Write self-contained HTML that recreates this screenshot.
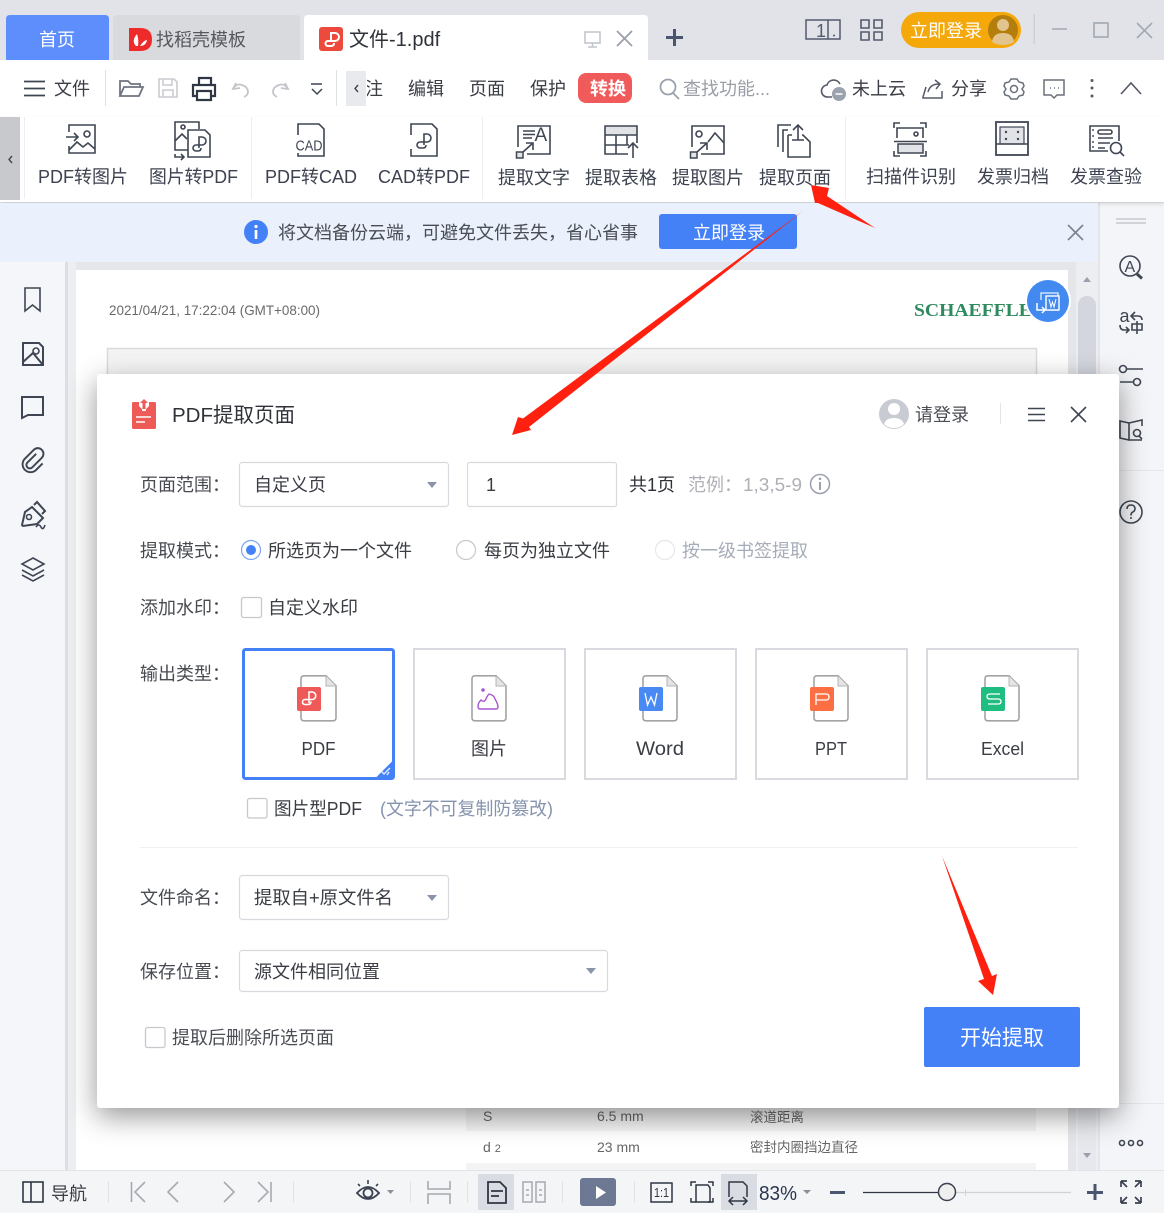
<!DOCTYPE html>
<html lang="zh-CN"><head><meta charset="utf-8"><title>PDF提取页面</title>
<style>
html,body{margin:0;padding:0;background:#fff;width:1164px;height:1213px;overflow:hidden}
svg{display:block}
text{font-family:"Liberation Sans","Noto Sans CJK SC",sans-serif;font-size:18px;fill:#3a3d44}
.i{fill:none;stroke:#3f4653;stroke-width:2}
.i1{fill:none;stroke:#3f4653;stroke-width:1.6}
.g{fill:none;stroke:#b9bcc2;stroke-width:2}
.w{fill:#fff}
.card{fill:#fff;stroke:#d9d9df;stroke-width:2}
.box{fill:#fff;stroke:#d8dae0;stroke-width:1.2}
.doc{fill:#fff;stroke:#a3a3a3;stroke-width:1.6}
.lab{fill:#484b52}
.tb{text-anchor:middle;fill:#3a3d44}
</style></head><body>
<svg width="1164" height="1213" viewBox="0 0 1164 1213" xmlns="http://www.w3.org/2000/svg">
<defs>
<filter id="sh" x="-10%" y="-10%" width="120%" height="125%"><feDropShadow dx="0" dy="8" stdDeviation="14" flood-color="#000" flood-opacity=".42"/></filter>
<filter id="s2" x="-2%" y="-20%" width="104%" height="150%"><feDropShadow dx="0" dy="2" stdDeviation="2" flood-color="#000" flood-opacity=".12"/></filter>
<linearGradient id="fade" x1="0" y1="0" x2="0" y2="1"><stop offset="0" stop-color="#f3f3f3"/><stop offset="1" stop-color="#fff"/></linearGradient>
<clipPath id="c1"><rect x="367" y="70" width="30" height="40"/></clipPath>
</defs>
<rect width="1164" height="1213" fill="#e4e6e9"/>

<!-- left sidebar -->
<rect x="0" y="262" width="65" height="910" fill="#f4f6f9"/>
<rect x="65" y="262" width="3" height="910" fill="#dcdee2"/>
<rect x="68" y="262" width="8" height="910" fill="#eceef1"/>
<!-- page -->
<rect x="76" y="270" width="992" height="902" fill="#fff"/>
<text x="109" y="315" style="font-size:14px;fill:#6a6a6a" textLength="211" lengthAdjust="spacingAndGlyphs">2021/04/21, 17:22:04 (GMT+08:00)</text>
<text x="914" y="316" style="font-family:'Liberation Serif',serif;font-weight:bold;font-size:18px;fill:#2f8a5e" textLength="132" lengthAdjust="spacingAndGlyphs">SCHAEFFLER</text>
<circle cx="1048" cy="301" r="23" fill="#fff"/><circle cx="1048" cy="301" r="21" fill="#4289f0"/>
<path d="M1041 300v-7h17v17h-10" fill="none" stroke="#cfe1fb" stroke-width="1.500"/><rect x="1046" y="296" width="13" height="14" fill="#4289f0" stroke="#fff" stroke-width="1.400"/><path d="M1049 299l2 8 1.500-5 1.500 5 2-8" fill="none" stroke="#fff" stroke-width="1"/><path d="M1037 303v7h8m-3-3l3 3-3 3" fill="none" stroke="#fff" stroke-width="1.500"/>
<rect x="107.500" y="348.500" width="929" height="60" fill="url(#fade)" stroke="#dadada" stroke-width="1.500"/>
<rect x="466" y="1100" width="570" height="31" fill="#f4f4f4"/>
<rect x="466" y="1163" width="570" height="9" fill="#f4f4f4"/>
<text x="483" y="1121" style="font-size:14px;fill:#666">S</text>
<text x="597" y="1121" style="font-size:14px;fill:#666">6.5  mm</text>
<text x="750" y="1122" style="font-size:13.500px;fill:#666">滚道距离</text>
<text x="483" y="1152" style="font-size:14px;fill:#666">d <tspan style="font-size:11px">2</tspan></text>
<text x="597" y="1152" style="font-size:14px;fill:#666">23  mm</text>
<text x="750" y="1152" style="font-size:13.500px;fill:#666">密封内圈挡边直径</text>

<!-- scrollbar + right side -->
<rect x="1076" y="262" width="24" height="910" fill="#eceef2"/>
<rect x="1078" y="296" width="18" height="860" rx="9" fill="#d3d6df"/>
<rect x="1078" y="1100" width="18" height="70" fill="#e6e8ed"/>
<path d="M1083 282h8l-4-5z" fill="#9aa0b0"/><path d="M1083 1153h8l-4 5z" fill="#9aa0b0"/>
<rect x="1099" y="203" width="65" height="969" fill="#f4f5f8"/>
<rect x="1098" y="203" width="2" height="969" fill="#e5e6ea"/>
<path d="M1116 219h30M1116 223h30" stroke="#c6c8cd" stroke-width="1.500"/>
<circle cx="1130" cy="266" r="10" class="i1"/><path d="M1137 274l5 4.500" stroke="#3f4653" stroke-width="3"/>
<text x="1124.500" y="272" style="font-size:16px;fill:#3f4653">A</text>
<text x="1119.500" y="322" style="font-size:18px;fill:#3f4653">a</text>
<path d="M1142 320q0-4-4-4h-6M1135 312l-4 4 4 4M1120 325q0 5 4 5h5M1126 327l3 3-3 3" class="i1"/>
<path d="M1132 324h10v6h-10zM1137 321v13" class="i1"/>
<circle cx="1123" cy="369" r="3.500" class="i1"/><path d="M1127 369h16M1120 382h13" class="i1"/><circle cx="1137" cy="382" r="3.500" class="i1"/>
<path d="M1120 421l9 2v17l-9-2zM1129 423l13-3v6M1129 440h13" class="i1"/><circle cx="1137" cy="433" r="3.500" class="i1"/><path d="M1139 436l3 3" class="i1"/>
<rect x="1100" y="470" width="64" height="1" fill="#e6e7ea"/>
<circle cx="1131" cy="512" r="11" class="i1"/><path d="M1127 509q0-4 4-4t4 4q0 2-3 3.500-1 .7-1 3" class="i1"/><circle cx="1131" cy="518" r="1" fill="#3f4653"/>
<rect x="1100" y="1103" width="64" height="1" fill="#e6e7ea"/>
<circle cx="1122" cy="1143" r="2.500" class="i1"/><circle cx="1131" cy="1143" r="2.500" class="i1"/><circle cx="1140" cy="1143" r="2.500" class="i1"/>

<!-- left icons -->
<path d="M25 288h15v23l-7.500-6-7.500 6z" class="i1" stroke-width="2"/>
<path d="M23 343h16l4 4v18H23zM23 362l10-9 10 12" class="i"/><circle cx="36" cy="351" r="3" class="i1"/>
<path d="M22 397h21v18H28l-6 3z" class="i"/>
<path transform="translate(33 461) scale(.8) translate(-33 -465)" d="M37 456l-11 11a4 4 0 0 0 6 6l12-12a7 7 0 0 0-10-10l-12 12a10 10 0 0 0 14 14l9-9" fill="none" stroke="#3f4653" stroke-width="2.400"/>
<path d="M32 507l11 11-6 6-14 2-1-1 3-13zM34 505l3-3 8 9-3 3" class="i"/><circle cx="29" cy="517" r="2.500" class="i1"/><path d="M36 527q3-4 5 0t4-2" class="i1"/>
<path d="M33 558l11 6-11 6-11-6zM22 570l11 6 11-6M22 575l11 6 11-6" class="i1"/>

<!-- Tab bar -->
<rect x="0" y="0" width="1164" height="60" fill="#e1e3e8"/>
<path d="M6 60V19q0-4 4-4h95q4 0 4 4v41z" fill="#5e8efc"/>
<text x="39" y="46" style="fill:#fff">首页</text>
<path d="M113 60V19q0-4 4-4h179q4 0 4 4v41z" fill="#d9dade"/>
<path d="M129 28h11q12 0 12 11.500T140 51h-11z" fill="#ee2a2a"/><path d="M136 46q-5-5 1-12 2 6 1 12zM140 46q4-6 7-6-1 6-7 6z" fill="#fff"/>
<text x="156" y="46" style="fill:#55585e">找稻壳模板</text>
<path d="M304 60V19q0-4 4-4h336q4 0 4 4v41z" fill="#fff"/>
<rect x="319" y="27" width="24" height="24" rx="3" fill="#ec4a3c"/>
<path d="M331 42v-9h4a3.500 3.500 0 0 1 0 8h-7a2.500 2.500 0 0 0 0 5h3q3 0 3-3" fill="none" stroke="#fff" stroke-width="2"/>
<text x="349" y="46" style="font-size:20px;fill:#2f3238">文件-1.pdf</text>
<path d="M585 32h15v11h-15zM592.500 43v4M588 47h9" fill="none" stroke="#bfc3ca" stroke-width="1.500"/>
<path d="M617 31l15 15M632 31l-15 15" stroke="#9a9fa8" stroke-width="1.800"/>
<path d="M666 37.500h17M674.500 29v17" stroke="#4a5570" stroke-width="3"/>
<path d="M806 20h34v19h-34zM828 20v19" fill="none" stroke="#525a6e" stroke-width="1.500"/><path d="M833 35.500h2" stroke="#525a6e" stroke-width="1.500"/><text x="816" y="37" style="font-size:18px;fill:#525a6e">1</text>
<path d="M861 20h8v8h-8zM874 20h8v8h-8zM861 32h8v8h-8zM874 32h8v8h-8z" fill="none" stroke="#525a6e" stroke-width="1.600"/>
<rect x="901" y="12" width="120" height="36" rx="18" fill="#f5a80a"/>
<text x="910" y="37" style="fill:#fff">立即登录</text>
<circle cx="1003" cy="30" r="15" fill="#b57e0c"/><circle cx="1003" cy="25" r="6" fill="#e2c48e"/><path d="M992 42q1-9 11-9t11 9q-5 3-11 3t-11-3z" fill="#e2c48e"/>
<rect x="1033.500" y="14" width="1.500" height="30" fill="#cdd0d6"/>
<path d="M1052 29h15" stroke="#a2a8b4" stroke-width="1.500"/>
<rect x="1094" y="23" width="14" height="14" fill="none" stroke="#a2a8b4" stroke-width="1.600"/>
<path d="M1137 23l15 15M1152 23l-15 15" stroke="#a2a8b4" stroke-width="1.600"/>

<!-- Row 2 -->
<rect x="0" y="60" width="1164" height="57" fill="#fff"/>
<path d="M24 81.500h21M24 88.500h21M24 95.500h21" stroke="#3f4653" stroke-width="1.800"/>
<text x="54" y="95">文件</text>
<rect x="105" y="70" width="1" height="36" fill="#dfe0e3"/>
<path d="M120 96V81h8l3 3h9v3M120 96l4-9h19l-4 9z" fill="none" stroke="#6f7580" stroke-width="1.800"/>
<path d="M159 79h15l3 3v15h-18zM163 79v6h9v-6M163 97v-7h10v7" fill="none" stroke="#c9cbcf" stroke-width="1.600"/>
<path d="M199 85v-7h12v7M196 96h-3V85h22v11h-3M197 91h14v9h-14z" fill="none" stroke="#2f3644" stroke-width="2.200"/>
<path d="M236 83l-3 6 7-1M233 89q3-6 9-4 6 2 6 7 0 3-4 5" fill="none" stroke="#c3c5ca" stroke-width="1.800"/>
<path d="M285 83l3 6-7-1M288 89q-3-6-9-4-6 2-6 7 0 3 4 5" fill="none" stroke="#c3c5ca" stroke-width="1.800"/>
<path d="M311 84h11M312 89l5 5 5-5" fill="none" stroke="#3f4653" stroke-width="1.500"/>
<rect x="336" y="70" width="1" height="36" fill="#dfe0e3"/>
<rect x="346" y="71" width="20" height="35" fill="#e8eaed"/>
<path d="M358 85l-3 3.500 3 3.500" fill="none" stroke="#3f4653" stroke-width="1.400"/>
<g clip-path="url(#c1)"><text x="365" y="95">注</text></g>
<text x="408" y="95">编辑</text><text x="469" y="95">页面</text><text x="530" y="95">保护</text>
<rect x="578" y="73" width="54" height="30" rx="8" fill="#f05a5a"/>
<text x="590" y="95" style="fill:#fff;font-weight:bold">转换</text>
<circle cx="668" cy="87" r="7.500" fill="none" stroke="#9aa2ae" stroke-width="1.800"/><path d="M673 93l6 6" stroke="#9aa2ae" stroke-width="1.800"/>
<text x="683" y="95" style="fill:#9a9ea6">查找功能...</text>
<path d="M832 97h-4a6 6 0 0 1-1-12 7 7 0 0 1 13-1" fill="none" stroke="#555b66" stroke-width="1.600"/>
<circle cx="839" cy="94" r="7" fill="#9aa2ae"/><path d="M835.500 94h7" stroke="#fff" stroke-width="1.500"/>
<text x="852" y="95">未上云</text>
<path d="M926 87l-3 10v1h19v-7M928 92q2-8 11-8M935 80l5 4-4 5" fill="none" stroke="#555b66" stroke-width="1.500"/>
<text x="951" y="95">分享</text>
<path d="M1014 79l3 0 2 3 4 1 1 3-2 3 2 3-1 3-4 1-2 3h-6l-2-3-4-1-1-3 2-3-2-3 1-3 4-1 2-3z" fill="none" stroke="#6a707b" stroke-width="1.500"/><circle cx="1014" cy="89" r="3.500" fill="none" stroke="#6a707b" stroke-width="1.500"/>
<path d="M1044 80h20v15h-7l-3 3-3-3h-7z" fill="none" stroke="#6a707b" stroke-width="1.500"/><path d="M1050 88h1M1054 88h1M1058 88h1" stroke="#6a707b" stroke-width="1.500"/>
<circle cx="1092" cy="80.500" r="1.500" fill="#555b66"/><circle cx="1092" cy="88" r="1.500" fill="#555b66"/><circle cx="1092" cy="96" r="1.500" fill="#555b66"/>
<path d="M1121 94l10-11 10 11" fill="none" stroke="#555b66" stroke-width="1.600"/>

<!-- Row 3 -->
<rect x="0" y="117" width="1164" height="85" fill="#fff" filter="url(#s2)"/>
<rect x="0" y="117" width="20" height="83" fill="#c8c9cc"/>
<path d="M12 156l-3 3.500 3 3.500" fill="none" stroke="#3f4653" stroke-width="1.400"/>
<path d="M24.500 117v82M251.500 117v82M482.500 117v82M845.500 117v82" stroke="#eeeef0"/>
<!-- icon 1 -->
<path d="M69 132v-7h26v28H69v-7M69 150l8-8 6 5 5-4 7 6" class="i1"/><circle cx="87" cy="134" r="3" class="i1"/><path d="M66 137h12m-4-4l4 4-4 4" class="i1"/>
<!-- icon 2 -->
<path d="M188 150h-13v-28h24v7M175 141l7-7 5 5" class="i1"/><circle cx="183" cy="127" r="2" class="i1"/>
<path d="M188 130h17l5 5v22h-22z" fill="#fff" stroke="#3f4653" stroke-width="1.600"/>
<path d="M199 148v-11h3a3.500 3.500 0 0 1 0 8h-6a3 3 0 0 0 0 6h2q3 0 3-3" class="i1"/><path d="M175 154v3h9m-3-3l3 3-3 3" class="i1"/>
<!-- icon 3 -->
<path d="M298 135v-11h21l5 5v27h-26v-3" class="i1"/>
<text x="295.500" y="150.500" style="font-size:15px;fill:#3f4653" textLength="27" lengthAdjust="spacingAndGlyphs">CAD</text>
<!-- icon 4 -->
<path d="M411 135v-11h21l5 5v27h-26v-7" class="i1"/>
<path d="M424 145v-11h3a3.500 3.500 0 0 1 0 8h-7a3 3 0 0 0 0 6h3q3 0 3-3" class="i1"/>
<!-- icon 5 -->
<path d="M518 147v-21h32v28h-23" class="i1"/><path d="M523 131h12M523 134.500h12M523 138h9" stroke="#3f4653" stroke-width="1.400"/>
<text x="534.500" y="141" style="font-size:19px;fill:#3f4653">A</text>
<rect x="516.500" y="152" width="6.500" height="6" fill="#e3e4e6" stroke="#3f4653" stroke-width="1.500"/><path d="M523 152l10-9M526 143h7v7" class="i1"/>
<!-- icon 6 -->
<rect x="605" y="126" width="32" height="9" fill="#e1e3e6"/>
<path d="M628 154h-23v-28h32v17M605 135h32M605 145h24M616 135v19M627 135v10" class="i1"/><path d="M633 158v-15m-5 5l5-5 5 5" class="i1"/>
<!-- icon 7 -->
<path d="M692 147v-21h32v28h-23M708 142l7-9 9 10" class="i1"/><circle cx="699" cy="134" r="3" class="i1"/>
<rect x="690.500" y="152" width="6.500" height="6" fill="#e3e4e6" stroke="#3f4653" stroke-width="1.500"/><path d="M697 152l10-9M700 143h7v7" class="i1"/>
<!-- icon 8 -->
<path d="M778 147v-22h13M783 152v-22h5M788 135v22h22v-15l-7-7h-1M788 135h4M798 140v-15M793 130l5-5 5 5M792 140h12" class="i1"/>
<!-- icon 9 -->
<path d="M894 128v-5h6M926 128v-5h-6M894 151v5h6M926 151v5h-6" class="i1"/>
<path d="M897 138v-10h26v10" class="i1"/><circle cx="916" cy="134" r="2" class="i1"/>
<path d="M894 141.500h33" class="i1"/><rect x="898" y="144" width="25" height="9" fill="#e1e3e6" stroke="#3f4653" stroke-width="1.500"/>
<!-- icon 10 -->
<rect x="996" y="122" width="32" height="33" fill="none" stroke="#3f4653" stroke-width="1.800"/>
<rect x="1000" y="127" width="24" height="17" fill="#e1e3e6" stroke="#3f4653" stroke-width="1.200"/><path d="M996 144h32" class="i1"/>
<circle cx="1006" cy="132" r="1.200" fill="#3f4653"/><circle cx="1006" cy="139" r="1.200" fill="#3f4653"/><circle cx="1018" cy="132" r="1.200" fill="#3f4653"/><circle cx="1018" cy="139" r="1.200" fill="#3f4653"/>
<!-- icon 11 -->
<path d="M1108 151h-18v-25h29v15" class="i1"/><rect x="1098" y="130" width="14" height="4" rx="2" class="i1"/>
<path d="M1093 129v2M1093 135v2M1093 141v2M1093 146v2M1098 138h15M1098 143h12M1098 148h7" stroke="#3f4653" stroke-width="1.400"/>
<circle cx="1116" cy="148" r="5.500" fill="#fff" stroke="#3f4653" stroke-width="1.600"/><path d="M1120 152l4 4" class="i1"/>

<text x="38" y="183" style="fill:#3d4250">PDF转图片</text><text x="149" y="183" style="fill:#3d4250" textLength="89" lengthAdjust="spacingAndGlyphs">图片转PDF</text>
<text x="265" y="183" style="fill:#3d4250">PDF转CAD</text><text x="378" y="183" style="fill:#3d4250">CAD转PDF</text>
<text x="498" y="184" style="fill:#3d4250">提取文字</text><text x="585" y="184" style="fill:#3d4250">提取表格</text>
<text x="672" y="184" style="fill:#3d4250">提取图片</text><text x="759" y="184" style="fill:#3d4250">提取页面</text>
<text x="866" y="183" style="fill:#3d4250">扫描件识别</text><text x="977" y="183" style="fill:#3d4250">发票归档</text><text x="1070" y="183" style="fill:#3d4250">发票查验</text>

<!-- Banner -->
<rect x="0" y="203" width="1098" height="59" fill="#eaf1fd"/>
<circle cx="256" cy="232" r="12" fill="#4481f7"/><rect x="254.700" y="230" width="2.600" height="9" fill="#fff"/><circle cx="256" cy="226.500" r="1.600" fill="#fff"/>
<text x="278" y="239" style="fill:#4a4d54">将文档备份云端&#xFF0C;可避免文件丢失&#xFF0C;省心省事</text>
<rect x="659" y="214" width="138" height="35" rx="3" fill="#4481f7"/>
<text x="693" y="239" style="fill:#fff">立即登录</text>
<path d="M1068 225l15 15M1083 225l-15 15" stroke="#7d828c" stroke-width="1.600"/>

<!-- Dialog -->
<rect x="97" y="374" width="1022" height="734" rx="3" fill="#fff" filter="url(#sh)"/>
<rect x="132" y="402" width="24" height="27" rx="1.500" fill="#ee5a55"/>
<path d="M139 398h10v8l-3 3v2h-4v-2l-3-3z" fill="#fff"/><path d="M144 399l-4 4h2.500v6h3v-6h2.500z" fill="#ee5a55"/>
<path d="M136 417h15M136 422h9" stroke="#fff" stroke-width="1.400"/>
<text x="172" y="422" style="font-size:20.500px;fill:#2f3238">PDF提取页面</text>
<circle cx="894" cy="414" r="15" fill="#c8ccd2"/><circle cx="894" cy="409" r="6" fill="#fff"/><path d="M884 424q2-6 10-6t10 6q-4 4-10 4t-10-4z" fill="#fff"/>
<text x="915" y="421" style="fill:#4a4d54">请登录</text>
<rect x="1000" y="403" width="1" height="21" fill="#e3e4e7"/>
<path d="M1028 408.500h17M1028 414.500h17M1028 420.500h17" stroke="#3f4653" stroke-width="1.500"/>
<path d="M1071 407l15 15M1086 407l-15 15" stroke="#3f4653" stroke-width="1.600"/>

<text x="140" y="491" class="lab">页面范围&#xFF1A;</text>
<rect x="239.500" y="462.500" width="209" height="44" rx="3" class="box"/>
<text x="254" y="491">自定义页</text><path d="M427 482h10l-5 6z" fill="#8a93aa"/>
<rect x="467.500" y="462.500" width="149" height="44" rx="2" class="box"/>
<text x="486" y="491">1</text>
<text x="629" y="491" style="fill:#2f3238">共1页</text>
<text x="688" y="491" style="fill:#aeb0b6">范例&#xFF1A;</text><text x="743" y="491" style="fill:#aeb0b6" textLength="59" lengthAdjust="spacingAndGlyphs">1,3,5-9</text>
<circle cx="820" cy="484" r="9.500" fill="none" stroke="#9aa0ae" stroke-width="1.500"/><rect x="819" y="482" width="2" height="8" fill="#9aa0ae"/><circle cx="820" cy="478.800" r="1.300" fill="#9aa0ae"/>

<text x="140" y="557" class="lab">提取模式&#xFF1A;</text>
<circle cx="251" cy="550" r="9.500" fill="#fff" stroke="#7aa5f5" stroke-width="1.200"/><circle cx="251" cy="550" r="5" fill="#4481f7"/>
<text x="268" y="557">所选页为一个文件</text>
<circle cx="466" cy="550" r="9.500" fill="#fff" stroke="#c6c8ce" stroke-width="1.200"/>
<text x="484" y="557">每页为独立文件</text>
<circle cx="665" cy="550" r="9.500" fill="#fff" stroke="#e6e7ea" stroke-width="1.200"/>
<text x="682" y="557" style="fill:#a6acb8">按一级书签提取</text>

<text x="140" y="614" class="lab">添加水印&#xFF1A;</text>
<rect x="241.500" y="597.500" width="20" height="20" rx="2" fill="#fff" stroke="#c6c8ce" stroke-width="1.300"/>
<text x="268" y="614">自定义水印</text>

<text x="140" y="680" class="lab">输出类型&#xFF1A;</text>
<rect x="243.500" y="649.500" width="150" height="129" rx="2" fill="#fff" stroke="#4481f7" stroke-width="3"/>
<path d="M375 778.500l19-19v16q0 4-3 4z" fill="#4481f7"/><path d="M381 771l3 3 6-6M389 772l-2 3" fill="none" stroke="#dfe9fd" stroke-width="1.500"/>
<rect x="414" y="649" width="151" height="130" class="card"/>
<rect x="585" y="649" width="151" height="130" class="card"/>
<rect x="756" y="649" width="151" height="130" class="card"/>
<rect x="927" y="649" width="151" height="130" class="card"/>

<path d="M304 675.800h22l10 10v32q0 3-3 3h-29q-3 0-3-3v-39q0-3 3-3z" class="doc"/><path d="M326 676v10h10" fill="#e4e4e4" stroke="#b5b5b5" stroke-width="1"/>
<rect x="297" y="687" width="24" height="24" rx="2" fill="#ef5a58"/><path d="M309 702v-11h3a3.500 3.500 0 0 1 0 7.500h-7a2.500 2.500 0 0 0 0 5h3q3 0 3-3" fill="none" stroke="#fff" stroke-width="1.600" transform="translate(0 1)"/>
<path d="M475 675.800h21l10 10v32q0 3-3 3h-28q-3 0-3-3v-39q0-3 3-3z" class="doc"/><path d="M496 676v10h10" fill="#e4e4e4" stroke="#b5b5b5" stroke-width="1"/>
<circle cx="483" cy="690" r="1.800" fill="#a956d4"/><path d="M480 709q-2 0-2-3 0-3 3-6 3 3 5-1 1-3 3-5 5 1 6 5 3 5 3 8 0 2-2 2z" fill="none" stroke="#a956d4" stroke-width="1.400"/>
<path d="M646 675.800h21l10 10v32q0 3-3 3h-28q-3 0-3-3v-39q0-3 3-3z" class="doc"/><path d="M667 676v10h10" fill="#e4e4e4" stroke="#b5b5b5" stroke-width="1"/>
<rect x="639" y="687" width="24" height="24" rx="2" fill="#4889f4"/><path d="M645 693l2.500 12 3.500-8 3.500 8 2.500-12" fill="none" stroke="#fff" stroke-width="1.300"/>
<path d="M817 675.800h21l10 10v32q0 3-3 3h-28q-3 0-3-3v-39q0-3 3-3z" class="doc"/><path d="M838 676v10h10" fill="#e4e4e4" stroke="#b5b5b5" stroke-width="1"/>
<rect x="810" y="687" width="24" height="24" rx="2" fill="#fb6f42"/><path d="M816 705v-11h10q3 0 3 3t-3 3h-10" fill="none" stroke="#fff" stroke-width="1.300"/>
<path d="M988 675.800h21l10 10v32q0 3-3 3h-28q-3 0-3-3v-39q0-3 3-3z" class="doc"/><path d="M1009 676v10h10" fill="#e4e4e4" stroke="#b5b5b5" stroke-width="1"/>
<rect x="981" y="687" width="24" height="24" rx="2" fill="#1fbd80"/><path d="M1000 694h-10q-3 0-3 2.500t3 2.500h8q3 0 3 2.500t-3 2.500h-10" fill="none" stroke="#fff" stroke-width="1.300"/>

<text x="318.500" y="755" class="tb" textLength="34" lengthAdjust="spacingAndGlyphs">PDF</text>
<text x="489" y="755" class="tb">图片</text>
<text x="660" y="755" style="font-size:19px" class="tb" textLength="48" lengthAdjust="spacingAndGlyphs">Word</text>
<text x="831" y="755" class="tb" textLength="32" lengthAdjust="spacingAndGlyphs">PPT</text>
<text x="1002.500" y="755" class="tb" textLength="43" lengthAdjust="spacingAndGlyphs">Excel</text>

<rect x="247.500" y="798.500" width="19.500" height="19.500" rx="2" fill="#fff" stroke="#c6c8ce" stroke-width="1.300"/>
<text x="274" y="815" textLength="88" lengthAdjust="spacingAndGlyphs">图片型PDF</text>
<text x="380" y="815" style="fill:#8593ad" textLength="173" lengthAdjust="spacingAndGlyphs">(文字不可复制防篡改)</text>
<rect x="140" y="847" width="938" height="1" fill="#f0f0f2"/>

<text x="140" y="904" class="lab">文件命名&#xFF1A;</text>
<rect x="239.500" y="875.500" width="209" height="44" rx="3" class="box"/>
<text x="254" y="904" textLength="139" lengthAdjust="spacingAndGlyphs">提取自+原文件名</text><path d="M427 895h10l-5 6z" fill="#8a93aa"/>
<text x="140" y="978" class="lab">保存位置&#xFF1A;</text>
<rect x="239.500" y="950.500" width="368" height="41" rx="3" class="box"/>
<text x="254" y="978">源文件相同位置</text><path d="M586 968h10l-5 6z" fill="#8a93aa"/>
<rect x="145.500" y="1027.500" width="19.500" height="20" rx="2" fill="#fff" stroke="#c6c8ce" stroke-width="1.300"/>
<text x="172" y="1044" style="fill:#4a4d54">提取后删除所选页面</text>
<rect x="924" y="1007" width="156" height="60" rx="2" fill="#4481f7"/>
<text x="960" y="1045" style="font-size:21px;fill:#fff">开始提取</text>

<!-- Bottom bar -->
<rect x="0" y="1170" width="1164" height="43" fill="#f4f5f7"/>
<rect x="0" y="1170" width="1164" height="1" fill="#e1e3e7"/>
<rect x="23" y="1182" width="20" height="20" fill="none" stroke="#2f3644" stroke-width="1.600"/><path d="M31 1182v20" stroke="#2f3644" stroke-width="1.600"/>
<text x="51" y="1200" style="fill:#3a3d44">导航</text>
<rect x="108" y="1181" width="1" height="22" fill="#e0e1e4"/>
<path d="M131.500 1182v20M145 1182l-10 10 10 10M178 1182l-10 10 10 10M224 1182l10 10-10 10M258 1182l10 10-10 10M271 1182v20" fill="none" stroke="#a7aab0" stroke-width="1.600"/>
<rect x="293" y="1181" width="1" height="22" fill="#e0e1e4"/>
<path d="M357 1193q11-12 22 0-11 12-22 0z" fill="none" stroke="#3a4150" stroke-width="1.800"/><circle cx="368" cy="1193" r="4.500" fill="none" stroke="#3a4150" stroke-width="1.800"/><path d="M368 1180v4M358 1184l2 2M378 1184l-2 2" stroke="#3a4150" stroke-width="1.600"/>
<path d="M387 1190h7l-3.500 4z" fill="#8a8f99"/>
<rect x="410" y="1181" width="1" height="22" fill="#e0e1e4"/>
<path d="M428 1181v8h22v-8M428 1204v-10h22v10" fill="none" stroke="#a7aab0" stroke-width="1.600"/>
<rect x="467" y="1181" width="1" height="22" fill="#e0e1e4"/>
<rect x="478" y="1174" width="36" height="36" fill="#d9dde3"/>
<path d="M488 1182h12l6 6v15h-18zM491 1191h12M491 1196h8" fill="none" stroke="#2f3644" stroke-width="1.800"/>
<path d="M523 1182h9v20h-9zM536 1182h9v20h-9zM526 1190h3M526 1195h3M539 1190h3M539 1195h3" fill="none" stroke="#a7aab0" stroke-width="1.500"/>
<rect x="562" y="1181" width="1" height="22" fill="#e0e1e4"/>
<rect x="580" y="1178" width="36" height="28" rx="3" fill="#6d7892"/><path d="M596 1186l10 6.500-10 6.500z" fill="#fff"/>
<rect x="634" y="1181" width="1" height="22" fill="#e0e1e4"/>
<rect x="651" y="1183" width="21" height="19" fill="none" stroke="#2f3644" stroke-width="1.500"/><text x="654" y="1197" style="font-size:13px;fill:#2f3644" textLength="15" lengthAdjust="spacingAndGlyphs">1:1</text>
<path d="M691 1186v-4h5M713 1186v-4h-5M691 1198v4h5M713 1198v4h-5" fill="none" stroke="#2f3644" stroke-width="1.500"/><path d="M696 1185h12l2 3v14h-14z" fill="none" stroke="#2f3644" stroke-width="1.500"/>
<rect x="721" y="1174" width="36" height="36" fill="#d9dde3"/>
<path d="M729 1197v-15h14l4 4v11M729 1201h18M733 1197l-4 4 4 4M743 1197l4 4-4 4" fill="none" stroke="#2f3644" stroke-width="1.500"/>
<text x="759" y="1200" style="font-size:20px;fill:#2a3550" textLength="38" lengthAdjust="spacingAndGlyphs">83%</text>
<path d="M803 1190h8l-4 4z" fill="#8a8f99"/>
<path d="M830 1192.500h15" stroke="#4a5570" stroke-width="3"/>
<path d="M863 1192.500h84" stroke="#2f3644" stroke-width="1.300"/><path d="M947 1192.500h124" stroke="#d0d3d8" stroke-width="1.300"/><path d="M965.500 1189v7" stroke="#d0d3d8"/>
<circle cx="947" cy="1192" r="8.500" fill="#efeff0" stroke="#3a4150" stroke-width="1.500"/>
<path d="M1087 1192.500h16M1095 1184v16" stroke="#4a5570" stroke-width="3"/>
<path d="M1121 1181h6M1121 1181v6M1121 1181l6 6M1141 1181h-6M1141 1181v6M1141 1181l-6 6M1121 1203h6M1121 1203v-6M1121 1203l6-6M1141 1203h-6M1141 1203v-6M1141 1203l-6-6" fill="none" stroke="#3a4150" stroke-width="1.700"/>

<!-- Red arrows -->
<path d="M811 185l18 3-2 8 48 32-57-25-3 0z" fill="#ff2010"/>
<path d="M803 211L529 427l2 3-19 5 6-18 5 1.500z" fill="#ff2010"/>
<path d="M942 856l50 120 5-2-4 21-15-14 6-2z" fill="#ff2010"/>
</svg>
</body></html>
